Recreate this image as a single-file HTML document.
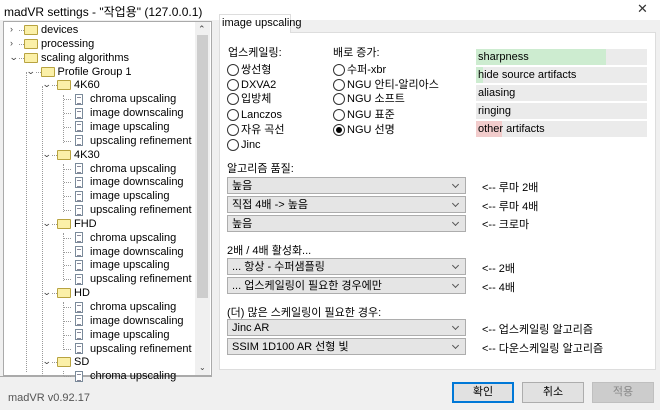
<!DOCTYPE html>
<html><head><meta charset="utf-8"><style>
*{margin:0;padding:0;box-sizing:border-box}
body{width:660px;height:410px;overflow:hidden;background:#f0f0f0;font-family:"Liberation Sans","Noto Sans CJK KR",sans-serif;font-size:11px;color:#000;position:relative}
.a{position:absolute;white-space:nowrap}
.title{left:0;top:0;width:660px;height:20px;background:#fff}
.tree{left:3px;top:21px;width:209px;height:355px;background:#fff;border:1px solid #aaa;overflow:hidden}
.sb{left:195px;top:22px;width:15px;height:353px;background:#f0f0f0}
.thumb{left:197px;top:35px;width:11px;height:263px;background:#cdcdcd}
.fold{position:absolute;width:14px;height:10px;background:#fbf0a8;border:1px solid #b8a340;border-radius:1px}
.doc{position:absolute;width:8px;height:11px;border:1px solid #7a8a9a;background:#fff}
.doc:after{content:"";position:absolute;left:1px;top:2px;width:4px;height:5px;border-top:1px solid #889;border-bottom:1px solid #889}
.chev{position:absolute;font-size:9px;color:#444}
.panel{left:219px;top:32px;width:437px;height:338px;background:#fff;border:1px solid #ddd}
.tab{left:219px;top:14px;width:72px;height:19px;background:#fff;border:1px solid #ddd;border-bottom:none;padding:2px 0 0 2px}
.rad{position:absolute;width:12px;height:12px;border:1px solid #333;border-radius:50%;background:#fff}
.rate{position:absolute;left:476px;width:171px;height:16px;background:#ebebeb;line-height:16px;padding-left:2px}
.cb{position:absolute;left:227px;width:239px;height:17px;background:#e5e5e5;border:1px solid #adadad;line-height:16px;padding-left:4px}
.cb:after{content:"";position:absolute;right:7px;top:4px;width:4px;height:4px;border-right:1px solid #555;border-bottom:1px solid #555;transform:rotate(45deg)}
.btn{position:absolute;top:382px;width:62px;height:21px;background:#e1e1e1;border:1px solid #adadad;text-align:center;line-height:19px}
.dl{position:absolute;border-left:1px dotted #999}
.dh{position:absolute;border-top:1px dotted #999;width:7px}
</style></head><body>
<div class="a title"></div>
<div class="a" style="left:4px;top:3px;font-size:12px">madVR settings - "작업용" (127.0.0.1)</div>
<div class="a" style="left:637px;top:1px;font-size:13px;color:#333">✕</div>

<div class="a tree"></div>
<div class="a sb"></div><div class="a thumb"></div>
<div class="a" style="left:198px;top:24px;font-size:9px;color:#444">⌃</div>
<div class="a" style="left:199px;top:363px;font-size:8px;color:#444">⌄</div>

<div class="a" style="left:0;top:376px;width:212px;height:1px;background:#aaa"></div>
<div class="a" style="left:8px;top:392px;color:#555">madVR v0.92.17</div>

<div class="a panel"></div>
<div class="a tab">image upscaling</div>

<div class="a" style="left:228px;top:44px">업스케일링:</div>
<div class="a" style="left:333px;top:44px">배로 증가:</div>

<div class="rate" style="top:49px"><div class="a" style="left:0;top:0;width:130px;height:16px;background:#cdecd0"></div><span style="position:relative">sharpness</span></div>
<div class="rate" style="top:67px"><div class="a" style="left:0;top:0;width:7px;height:16px;background:#cdecd0"></div><span style="position:relative">hide source artifacts</span></div>
<div class="rate" style="top:85px">aliasing</div>
<div class="rate" style="top:103px">ringing</div>
<div class="rate" style="top:121px"><div class="a" style="left:0;top:0;width:26px;height:16px;background:#f2cccc"></div><span style="position:relative">other artifacts</span></div>

<div class="a" style="left:227px;top:160px">알고리즘 품질:</div>
<div class="cb" style="top:177px">높음</div>
<div class="cb" style="top:196px">직접 4배 -&gt; 높음</div>
<div class="cb" style="top:215px">높음</div>
<div class="a" style="left:482px;top:179px">&lt;-- 루마 2배</div>
<div class="a" style="left:482px;top:198px">&lt;-- 루마 4배</div>
<div class="a" style="left:482px;top:216px">&lt;-- 크로마</div>

<div class="a" style="left:227px;top:242px">2배 / 4배 활성화...</div>
<div class="cb" style="top:258px">... 항상 - 수퍼샘플링</div>
<div class="cb" style="top:277px">... 업스케일링이 필요한 경우에만</div>
<div class="a" style="left:482px;top:260px">&lt;-- 2배</div>
<div class="a" style="left:482px;top:279px">&lt;-- 4배</div>

<div class="a" style="left:227px;top:304px">(더) 많은 스케일링이 필요한 경우:</div>
<div class="cb" style="top:319px">Jinc AR</div>
<div class="cb" style="top:338px">SSIM 1D100 AR 선형 빛</div>
<div class="a" style="left:482px;top:321px">&lt;-- 업스케일링 알고리즘</div>
<div class="a" style="left:482px;top:340px">&lt;-- 다운스케일링 알고리즘</div>

<div class="btn" style="left:452px;border:2px solid #0078d7;line-height:17px">확인</div>
<div class="btn" style="left:522px">취소</div>
<div class="btn" style="left:592px;background:#ccc;border-color:#bfbfbf;color:#888">적용</div>

<div id="t"></div>
<script>
var h='';
var r=[["devices",0,">"],["processing",0,">"],["scaling algorithms",0,"v"],["Profile Group 1",1,"v"]];
var g=["4K60","4K30","FHD","HD"],l=["chroma upscaling","image downscaling","image upscaling","upscaling refinement"];
g.forEach(function(x){r.push([x,2,"v"]);l.forEach(function(y){r.push([y,3,""])})});
r.push(["SD",2,"v"]);r.push(["chroma upscaling",3,""]);
r.forEach(function(e,i){
 var y=23+i*13.85, d=e[1];
 if(d<3){var cx=10+d*16.5;
  h+='<div class="a chev" style="left:'+cx+'px;top:'+(y+1)+'px;'+(e[2]==">"?'':'transform:scaleX(1.3)')+'">'+(e[2]==">"?'›':'⌄')+'</div>';
  h+='<div class="dh" style="left:'+(cx+9)+'px;top:'+(y+7)+'px;width:5px"></div>';
  h+='<div class="fold" style="left:'+(cx+14)+'px;top:'+(y+2)+'px"></div>';
  h+='<div class="a" style="left:'+(cx+31)+'px;top:'+(y)+'px;line-height:14px">'+e[0]+'</div>';
 }else{
  var sel=(i==14);
  h+='<div class="dh" style="left:64px;top:'+(y+7)+'px"></div>';
  if(sel)h+='<div class="a" style="left:72px;top:'+(y)+'px;width:88px;height:14px;background:#cce8ff"></div>';
  h+='<div class="doc" style="left:75px;top:'+(y+1.5)+'px"></div>';
  h+='<div class="a" style="left:90px;top:'+y+'px;line-height:14px">'+e[0]+'</div>';
 }
});
h+='<div class="dl" style="left:26px;top:72px;height:300px"></div>';
h+='<div class="dl" style="left:42px;top:86px;height:290px"></div>';
[86,155,224,293].forEach(function(t){h+='<div class="dl" style="left:63px;top:'+(t+9)+'px;height:'+(13.85*3.5)+'px"></div>'});
h+='<div class="dl" style="left:63px;top:371px;height:5px"></div>';
var c1=["쌍선형","DXVA2","입방체","Lanczos","자유 곡선","Jinc"],c2=["수퍼-xbr","NGU 안티-알리아스","NGU 소프트","NGU 표준","NGU 선명"];
var ys=[64,79,93,109,124,139];
c1.forEach(function(t,i){h+='<div class="rad" style="left:227px;top:'+ys[i]+'px"></div><div class="a" style="left:241px;top:'+ys[i]+'px;line-height:13px">'+t+'</div>'});
c2.forEach(function(t,i){h+='<div class="rad" style="left:333px;top:'+ys[i]+'px">'+(i==4?'<div style="position:absolute;left:2px;top:2px;width:6px;height:6px;border-radius:50%;background:#000"></div>':'')+'</div><div class="a" style="left:347px;top:'+ys[i]+'px;line-height:13px">'+t+'</div>'});
document.getElementById('t').innerHTML=h;
</script>
</body></html>
